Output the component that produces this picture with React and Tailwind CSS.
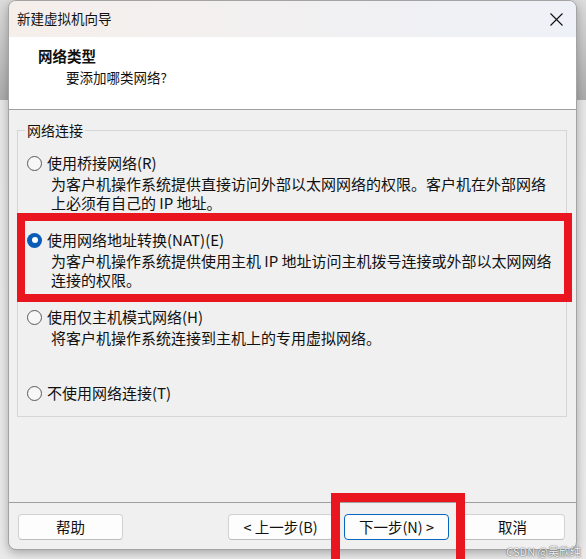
import React from 'react';

const options = [
  {
    label: '使用桥接网络(R)',
    lines: ['为客户机操作系统提供直接访问外部以太网网络的权限。客户机在外部网络', '上必须有自己的 IP 地址。'],
  },
  {
    label: '使用网络地址转换(NAT)(E)',
    checked: true,
    lines: ['为客户机操作系统提供使用主机 IP 地址访问主机拨号连接或外部以太网网络', '连接的权限。'],
  },
  {
    label: '使用仅主机模式网络(H)',
    lines: ['将客户机操作系统连接到主机上的专用虚拟网络。'],
  },
  { label: '不使用网络连接(T)' },
];

function Radio({ checked }) {
  if (checked) {
    return (
      <span className="w-[15px] h-[15px] rounded-full bg-[#0b5cb8] flex items-center justify-center shrink-0">
        <span className="w-[6px] h-[6px] rounded-full bg-white" />
      </span>
    );
  }
  return <span className="w-[15px] h-[15px] rounded-full border border-[#5a5a5a] bg-[#f7f7f7] shrink-0" />;
}

function Option({ label, lines, checked }) {
  return (
    <div className="flex flex-col">
      <div className="flex items-center h-[20px] gap-[5px]">
        <Radio checked={checked} />
        <span className="text-[15px] leading-[20px]">{label}</span>
      </div>
      {lines && (
        <div className="pl-[24px] mt-px text-[15px] leading-[19px] whitespace-nowrap">
          {lines.map(l => <div key={l}>{l}</div>)}
        </div>
      )}
    </div>
  );
}

function Button({ children, primary }) {
  return (
    <button
      className={primary
        ? 'w-[105px] h-[26px] rounded-[4px] border border-[#0a64c2] bg-[#fdfdfd] text-[14.5px] leading-none text-[#111]'
        : 'w-[105px] h-[26px] rounded-[4px] border border-[#d2d2d2] border-b-[#bdbdbd] bg-[#fdfdfd] text-[14.5px] leading-none text-[#111]'}
    >
      {children}
    </button>
  );
}

export default function App() {
  return (
    <div className="relative w-[586px] h-[559px] overflow-hidden bg-[linear-gradient(to_bottom,#dcdcdc_0px,#ababab_100px,#e6e6e6_100px,#e9e9e9_559px)] font-['Noto_Sans_CJK_SC',sans-serif] text-[#111]">
      {/* Dialog window */}
      <div className="ml-[8px] w-[569px] h-[550px] flex flex-col rounded-[8px] border border-[#a3a3a3] bg-[#f0f0f0] shadow-[0_3px_10px_rgba(0,0,0,0.28)] overflow-hidden">
        {/* Title bar */}
        <div className="h-[36px] shrink-0 flex items-center justify-between pl-[8px] pr-[13px] bg-[linear-gradient(to_right,#f5efeb,#eef1f7)]">
          <span className="text-[13.5px] leading-none">新建虚拟机向导</span>
          <svg width="13" height="13" viewBox="0 0 13 13" fill="none" stroke="#111" strokeWidth="1.1">
            <path d="M0.5 0.5 L12.5 12.5 M12.5 0.5 L0.5 12.5" />
          </svg>
        </div>

        {/* Header */}
        <div className="h-[73px] shrink-0 bg-white border-b border-[#a0a0a0] pl-[29px] pt-[9px]">
          <div className="text-[14.5px] leading-[20px] font-bold">网络类型</div>
          <div className="pl-[28px] mt-px text-[13.5px] leading-[20px]">要添加哪类网络?</div>
        </div>

        {/* Body */}
        <div className="flex-1 pt-[10px] pl-[8px] pr-[9px]">
          <fieldset className="border border-[#d6d6d6] pl-[7px] pr-[8px] pb-[13px]">
            <legend className="px-[2px] text-[14px] leading-[20px]">网络连接</legend>
            <div className="flex flex-col pt-[13px] pl-[2px]">
              <Option {...options[0]} />
              <div className="mt-[18px]"><Option {...options[1]} /></div>
              <div className="mt-[18px]"><Option {...options[2]} /></div>
              <div className="mt-[36px]"><Option {...options[3]} /></div>
            </div>
          </fieldset>
        </div>

        {/* Footer */}
        <div className="h-[47px] shrink-0 border-t border-[#a0a0a0] flex items-start pt-[11px] pl-[9px] pr-[11px]">
          <Button>帮助</Button>
          <div className="flex-1" />
          <div className="flex gap-[11px]">
            <Button>&lt; 上一步(B)</Button>
            <Button primary>下一步(N) &gt;</Button>
            <Button>取消</Button>
          </div>
        </div>
      </div>

      {/* Red annotation boxes */}
      <div className="absolute left-[17px] top-[213px] w-[555px] h-[89px] border-[8px] border-[#e9161f] pointer-events-none" />
      <div className="absolute left-[331px] top-[493px] w-[134px] h-[80px] border-[9px] border-[#e9161f] pointer-events-none" />

      {/* Watermark */}
      <div className="absolute right-[5px] bottom-[2px] text-[11px] leading-none text-[#f4f4f4] [text-shadow:0_0_1px_rgba(0,0,0,0.6),0_0_2px_rgba(0,0,0,0.4)]">CSDN @吴欣纯</div>
    </div>
  );
}
